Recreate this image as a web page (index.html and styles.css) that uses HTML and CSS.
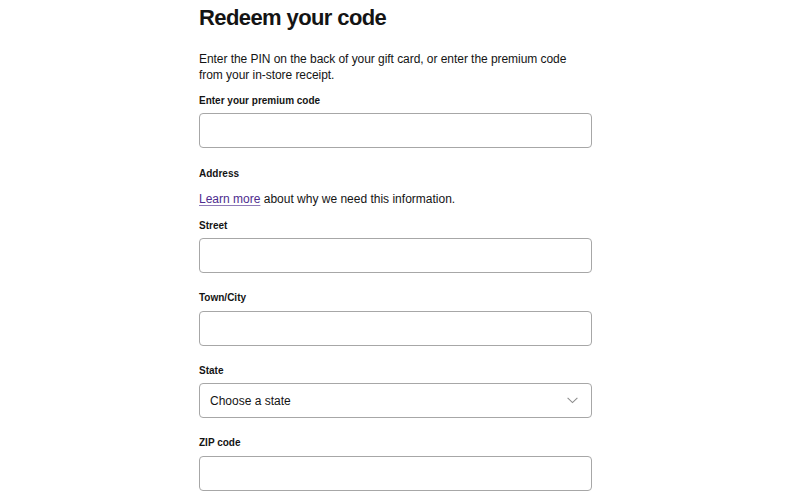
FILE: index.html
```html
<!DOCTYPE html>
<html lang="en">
<head>
<meta charset="utf-8">
<title>Redeem your code</title>
<link rel="stylesheet" href="styles.css">
</head>
<body>
<main class="page">
  <h1 class="title">Redeem your code</h1>
  <p class="intro">Enter the PIN on the back of your gift card, or enter the premium code from your in-store receipt.</p>

  <div class="field field-first">
    <label class="label" for="code">Enter your premium code</label>
    <input class="input" id="code" type="text">
  </div>

  <div class="label section-label">Address</div>
  <p class="note"><a class="link" href="#">Learn more</a> about why we need this information.</p>

  <div class="field">
    <label class="label" for="street">Street</label>
    <input class="input" id="street" type="text">
  </div>

  <div class="field">
    <label class="label" for="city">Town/City</label>
    <input class="input" id="city" type="text">
  </div>

  <div class="field">
    <label class="label" for="state">State</label>
    <div class="select" id="state">
      <span class="select-text">Choose a state</span>
      <svg class="chevron" width="11" height="7" viewBox="0 0 11 7" aria-hidden="true">
        <path d="M0.6 0.9 L5.5 5.6 L10.4 0.9" fill="none" stroke="#8c8c8c" stroke-width="1.1"/>
      </svg>
    </div>
  </div>

  <div class="field">
    <label class="label" for="zip">ZIP code</label>
    <input class="input" id="zip" type="text">
  </div>
</main>
</body>
</html>
```

FILE: styles.css
```css
html, body {
  margin: 0;
  padding: 0;
  background: #ffffff;
}

body {
  font-family: "Liberation Sans", Arial, sans-serif;
  color: #141414;
}

.page {
  width: 393px;
  margin-left: 199px;
  display: flex;
  flex-direction: column;
}

.title {
  margin: 0;
  font-size: 22px;
  line-height: 36px;
  font-weight: 700;
  letter-spacing: -0.6px;
}

.intro {
  margin: 15px 0 0;
  font-size: 12px;
  line-height: 16px;
  letter-spacing: -0.05px;
}

.field {
  display: flex;
  flex-direction: column;
}

.field-first {
  margin-top: 10.5px;
}

.field + .field {
  margin-top: 18px;
}

.label {
  display: block;
  font-size: 10px;
  line-height: 14px;
  font-weight: 700;
  margin-bottom: 5.5px;
}

.section-label {
  margin-top: 18.5px;
  margin-bottom: 0;
}

.note {
  margin: 10.3px 0 12px;
  font-size: 12px;
  line-height: 16px;
}

.link {
  color: #4e2c8e;
  text-decoration: underline;
  text-decoration-color: #8f7ab8;
  text-underline-offset: 2px;
}

.input,
.select {
  box-sizing: border-box;
  width: 393px;
  height: 35px;
  margin: 0;
  border: 1px solid #a7a7a7;
  border-radius: 4px;
  background: #fff;
  font: inherit;
}

.select {
  display: flex;
  align-items: center;
  justify-content: space-between;
  padding: 0 13px 0 10px;
}

.select-text {
  font-size: 12px;
  line-height: 16px;
}

.chevron {
  display: block;
}
```
